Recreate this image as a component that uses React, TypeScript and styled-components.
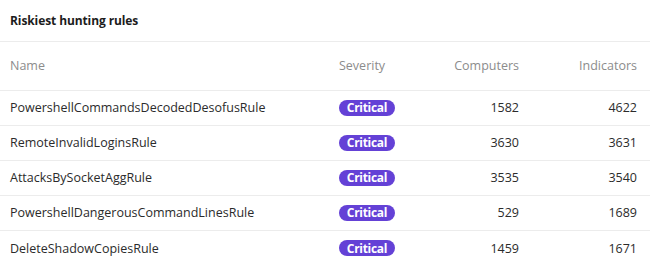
import { createGlobalStyle, styled } from 'styled-components'

const GlobalStyle = createGlobalStyle`
  body {
    margin: 0;
    background: #fff;
    font-family: 'Open Sans', 'Liberation Sans', sans-serif;
  }
`;

const Card = styled.section`
  width: 650px;
  background: #fff;
`;

const Title = styled.h2`
  margin: 0;
  height: 42px;
  box-sizing: border-box;
  padding: 0 10px 1px;
  display: flex;
  align-items: center;
  font-size: 12px;
  font-weight: 700;
  letter-spacing: -0.1px;
  color: #1c1c1c;
  border-bottom: 1px solid #ececec;
`;

const Row = styled.div<{ $head?: boolean }>`
  display: grid;
  grid-template-columns: 329px 80px 100px 118px;
  align-items: center;
  box-sizing: border-box;
  padding: 0 13px 1px 10px;
  height: ${p => (p.$head ? '49px' : '35px')};
  border-bottom: 1px solid #ececec;
  font-size: 12.5px;
  color: ${p => (p.$head ? '#8c8c8c' : '#2b2b2b')};

  &:last-child {
    border-bottom: none;
  }
`;

const Cell = styled.div<{ $right?: boolean }>`
  text-align: ${p => (p.$right ? 'right' : 'left')};
  white-space: nowrap;
`;

const Badge = styled.span`
  display: inline-flex;
  align-items: center;
  justify-content: center;
  width: 56px;
  height: 16px;
  border-radius: 8px;
  background: #6441d6;
  color: #fff;
  font-size: 12px;
  font-weight: 700;
  letter-spacing: -0.3px;
`;

interface RuleRow {
  name: string
  computers: number
  indicators: number
}

const rules: RuleRow[] = [
  { name: 'PowershellCommandsDecodedDesofusRule', computers: 1582, indicators: 4622 },
  { name: 'RemoteInvalidLoginsRule', computers: 3630, indicators: 3631 },
  { name: 'AttacksBySocketAggRule', computers: 3535, indicators: 3540 },
  { name: 'PowershellDangerousCommandLinesRule', computers: 529, indicators: 1689 },
  { name: 'DeleteShadowCopiesRule', computers: 1459, indicators: 1671 },
];

const App = () => {
  return (
    <>
      <GlobalStyle />
      <Card>
        <Title>Riskiest hunting rules</Title>
        <Row $head>
          <Cell>Name</Cell>
          <Cell>Severity</Cell>
          <Cell $right>Computers</Cell>
          <Cell $right>Indicators</Cell>
        </Row>
        {rules.map(rule => (
          <Row key={rule.name}>
            <Cell>{rule.name}</Cell>
            <Cell><Badge>Critical</Badge></Cell>
            <Cell $right>{rule.computers}</Cell>
            <Cell $right>{rule.indicators}</Cell>
          </Row>
        ))}
      </Card>
    </>
  );
};

export default App;
